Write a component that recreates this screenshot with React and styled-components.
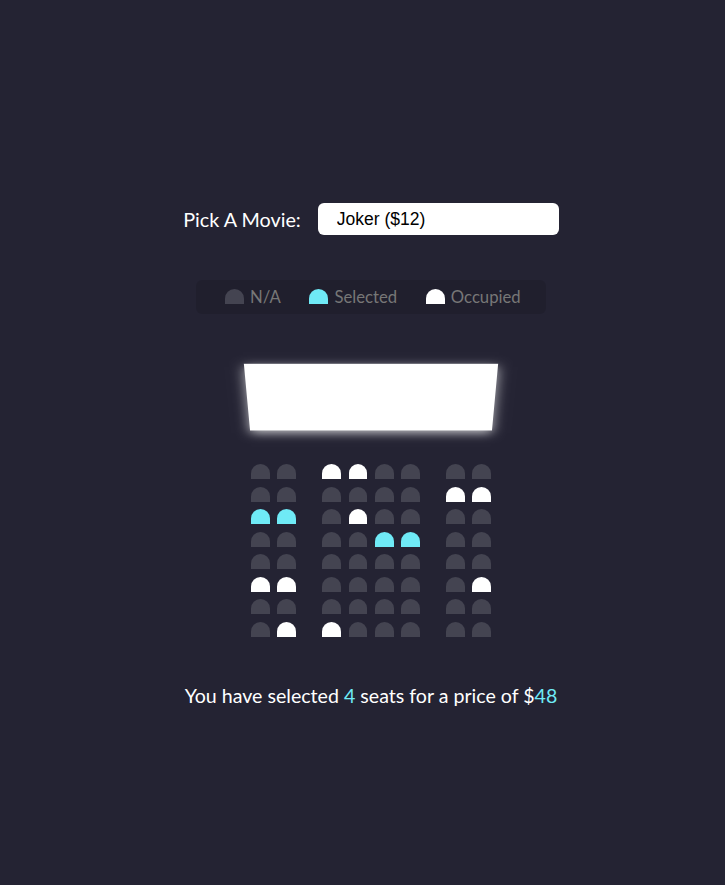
import { useState } from "react"
import styled, { createGlobalStyle } from "styled-components"

const GlobalStyle = createGlobalStyle`
* { box-sizing: border-box; }
body {
  margin: 0;
  background-color: #242333;
  color: #fff;
  font-family: Lato, "Open Sans", sans-serif;
}
`

const movies = [
  { name: "Avengers: Endgame", price: 10 },
  { name: "Joker", price: 12 },
  { name: "Toy Story 4", price: 8 },
  { name: "The Lion King", price: 9 },
]

// N = free, S = selected, O = occupied
const layout = [
  "NNOONNNN",
  "NNNNNNOO",
  "SSNONNNN",
  "NNNNSSNN",
  "NNNNNNNN",
  "OONNNNNO",
  "NNNNNNNN",
  "NOONNNNN",
]

export default function App() {
  const [movie, setMovie] = useState(1)
  const [seats, setSeats] = useState(layout.map((r) => r.split("")))

  const count = seats.flat().filter((s) => s === "S").length
  const price = movies[movie].price

  const toggle = (r, c) => {
    if (seats[r][c] === "O") return
    const next = seats.map((row) => [...row])
    next[r][c] = next[r][c] === "S" ? "N" : "S"
    setSeats(next)
  }

  return (
    <Page>
      <GlobalStyle />
      <MovieRow>
        <label>Pick A Movie:</label>
        <Select value={movie} onChange={(e) => setMovie(Number(e.target.value))}>
          {movies.map((m, i) => (
            <option key={i} value={i}>{m.name} (${m.price})</option>
          ))}
        </Select>
      </MovieRow>

      <Showcase>
        <li><Seat /><small>N/A</small></li>
        <li><Seat $state="S" /><small>Selected</small></li>
        <li><Seat $state="O" /><small>Occupied</small></li>
      </Showcase>

      <Theater>
        <Screen />
        {seats.map((row, r) => (
          <Row key={r}>
            {row.map((s, c) => (
              <Seat key={c} $state={s} $hover onClick={() => toggle(r, c)} />
            ))}
          </Row>
        ))}
      </Theater>

      <Summary>
        You have selected <span>{count}</span> seats for a price of $<span>{count * price}</span>
      </Summary>
    </Page>
  )
}

const Page = styled.div`
min-height: 100vh;
padding: 8px 0 0 17px;
display: flex;
flex-direction: column;
align-items: center;
justify-content: center;
`

const MovieRow = styled.div`
display: flex;
align-items: center;
margin: 23px 0 25px;
font-size: 19.8px;
`

const Select = styled.select`
width: 241px;
height: 32px;
margin-left: 17px;
padding: 0 19px;
border: 0;
border-radius: 6px;
background: #fff;
color: #000;
font-family: "Liberation Sans", Arial, sans-serif;
font-size: 17.5px;
appearance: none;
-webkit-appearance: none;
outline: none;
`

const Showcase = styled.ul`
display: flex;
justify-content: space-between;
margin: 20px 0 22px;
padding: 6px 12.5px;
list-style: none;
background: rgba(0, 0, 0, 0.1);
border-radius: 6px;
color: #777;

li{
  display: flex;
  align-items: center;
  margin: 0 12.5px;
  height: 22px;
}

small{
  margin-left: 2.5px;
  font-size: 16.7px;
}
`

const Seat = styled.div`
width: 18.75px;
height: 15px;
margin: 3.75px;
border-top-left-radius: 12.5px;
border-top-right-radius: 12.5px;
background-color: ${(p) => p.$state === "S" ? "#6feaf6" : p.$state === "O" ? "#fff" : "#444451"};
transition: transform 0.15s;

&:hover{
  cursor: ${(p) => p.$hover && p.$state !== "O" ? "pointer" : "default"};
  transform: ${(p) => p.$hover && p.$state !== "O" ? "scale(1.2)" : "none"};
}
`

const Theater = styled.div`
perspective: 1250px;
margin-bottom: 37.5px;
`

const Screen = styled.div`
width: 100%;
height: 87.5px;
margin: 18.75px 0;
background-color: #fff;
transform: rotateX(-45deg);
box-shadow: 0 3.75px 12.5px rgba(255, 255, 255, 0.7);
`

const Row = styled.div`
display: flex;

& > div:nth-of-type(2){
  margin-right: 22.5px;
}

& > div:nth-last-of-type(2){
  margin-left: 22.5px;
}
`

const Summary = styled.p`
margin: 6.25px 0;
font-size: 19.6px;

span{
  color: #6feaf6;
}
`
